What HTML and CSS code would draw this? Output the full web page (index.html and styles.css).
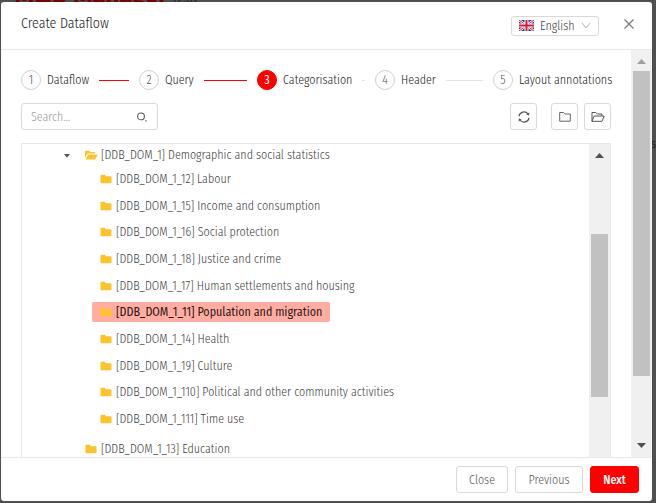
FILE: index.html
```
<!DOCTYPE html>
<html lang="en">
<head>
<meta charset="utf-8">
<title>Create Dataflow</title>
<link rel="stylesheet" href="styles.css">
</head>
<body>
<svg class="defs" aria-hidden="true">
  <symbol id="folder" viewBox="0 0 12 10"><path fill="#fac42a" d="M0.5 1.5Q.5 .8 1.3 .8H4.6L6.1 2.3H10.7Q11.5 2.3 11.5 3V8.5Q11.5 9.3 10.7 9.3H1.3Q.5 9.3 .5 8.5Z"/></symbol>
</svg>
<div class="behind" aria-hidden="true">M&amp;D Manager <small>(2.0)</small></div>
<div class="behind-cell" aria-hidden="true">s</div>
<main class="modal" role="dialog" aria-labelledby="title">
  <header class="head">
    <h1 id="title">Create Dataflow</h1>
    <div class="language">
      <svg width="15" height="11" viewBox="0 0 15 11"><path fill="#173b83" d="M0 0h15v11H0z"/><path stroke="#fff" stroke-width="2.4" d="m0 0 15 11M15 0 0 11"/><path stroke="#d8183b" d="m0 0 15 11M15 0 0 11"/><path stroke="#fff" stroke-width="4" d="M7.5 0v11M0 5.5h15"/><path stroke="#d8183b" stroke-width="2" d="M7.5 0v11M0 5.5h15"/></svg>
      <select aria-label="Language"><option>English</option></select>
      <svg width="10" height="8" viewBox="0 0 10 8"><path d="m1 1 4 5 4-5" fill="none" stroke="#b5b5b5"/></svg>
    </div>
    <button class="close" aria-label="Close dialog"><svg width="12" height="12" viewBox="0 0 12 12"><path d="m1.5 1.5 9 9m0-9-9 9" stroke="#777" stroke-width="1.2"/></svg></button>
  </header>
  <div class="body">
    <div class="content">
      <ol class="steps">
        <li class="done"><span class="num">1</span><span>Dataflow</span></li>
        <li class="done"><span class="num">2</span><span>Query</span></li>
        <li class="active"><span class="num">3</span><span>Categorisation</span></li>
        <li><span class="num">4</span><span>Header</span></li>
        <li><span class="num">5</span><span>Layout annotations</span></li>
      </ol>
      <div class="tools">
        <label class="search"><input type="text" placeholder="Search..." aria-label="Search">
          <svg width="12" height="12" viewBox="0 0 12 12"><circle cx="5" cy="5.4" r="3.4" fill="none" stroke="#555" stroke-width="1.1"/><path d="M9.5 9h1v1.4h-1z" fill="#555"/></svg></label>
        <button class="tool refresh" aria-label="Refresh"><svg width="14" height="14" viewBox="0 0 14 14" fill="none" stroke="#555" stroke-width="1.2"><path d="M2 6.2A5 5 0 0 1 11 4M12 7.8A5 5 0 0 1 3 10"/><path fill="#555" stroke="none" d="m12.4 2.4-.3 3.2L9.3 4.4zM1.6 11.6l.3-3.2 2.8 1.2z"/></svg></button>
        <button class="tool" aria-label="Collapse all"><svg width="12" height="12" viewBox="0 0 12 12" fill="none" stroke="#666"><path d="M.7 1.5H4.6L6.1 3H11.3V10.2H.7Z"/></svg></button>
        <button class="tool" aria-label="Expand all"><svg width="14" height="12" viewBox="0 0 14 12" fill="none" stroke="#555"><path d="M1 10.3V1.5H4.8L6.3 3H10.9V4.8M1 10.3 3.2 5H13.2L11 10.3Z"/></svg></button>
      </div>
      <div class="panel">
        <div class="tree">
          <div class="row parent"><svg class="caret" width="8" height="5" viewBox="0 0 8 5"><path fill="#555" d="M1 1h6L4 4.7z"/></svg><svg class="open" width="13" height="10" viewBox="0 0 13 10"><path fill="#fac42a" d="M0 8V1.5Q0 .8.8.8H4L5.5 2.1H9.5Q10.2 2.1 10.2 3V3.6H3.1Q2.5 3.6 2.2 4.1ZM.6 9.5 3 4.9Q3.2 4.5 3.7 4.5H12.2Q12.8 4.5 12.5 5.1L10.4 9Q10.1 9.5 9.6 9.5Z"/></svg><span>[DDB_DOM_1] Demographic and social statistics</span></div>
          <ul class="children">
            <li class="row"><svg width="12" height="10"><use href="#folder"/></svg><span>[DDB_DOM_1_12] Labour</span></li>
            <li class="row"><svg width="12" height="10"><use href="#folder"/></svg><span>[DDB_DOM_1_15] Income and consumption</span></li>
            <li class="row"><svg width="12" height="10"><use href="#folder"/></svg><span>[DDB_DOM_1_16] Social protection</span></li>
            <li class="row"><svg width="12" height="10"><use href="#folder"/></svg><span>[DDB_DOM_1_18] Justice and crime</span></li>
            <li class="row"><svg width="12" height="10"><use href="#folder"/></svg><span>[DDB_DOM_1_17] Human settlements and housing</span></li>
            <li class="row selected"><svg width="12" height="10"><use href="#folder"/></svg><span>[DDB_DOM_1_11] Population and migration</span></li>
            <li class="row"><svg width="12" height="10"><use href="#folder"/></svg><span>[DDB_DOM_1_14] Health</span></li>
            <li class="row"><svg width="12" height="10"><use href="#folder"/></svg><span>[DDB_DOM_1_19] Culture</span></li>
            <li class="row"><svg width="12" height="10"><use href="#folder"/></svg><span>[DDB_DOM_1_110] Political and other community activities</span></li>
            <li class="row"><svg width="12" height="10"><use href="#folder"/></svg><span>[DDB_DOM_1_111] Time use</span></li>
          </ul>
          <div class="row sibling"><svg width="12" height="10"><use href="#folder"/></svg><span>[DDB_DOM_1_13] Education</span></div>
        </div>
        <div class="bar inner"><svg width="9" height="5" viewBox="0 0 9 5"><path fill="#505050" d="M0 5 4.5 0 9 5z"/></svg><i></i></div>
      </div>
    </div>
    <div class="bar outer"><svg width="9" height="5" viewBox="0 0 9 5"><path fill="#a0a0a0" d="M0 5 4.5 0 9 5z"/></svg><i></i><svg class="down" width="9" height="5" viewBox="0 0 9 5"><path fill="#505050" d="M0 0 4.5 5 9 0z"/></svg></div>
  </div>
  <footer class="foot">
    <button class="btn">Close</button>
    <button class="btn wide">Previous</button>
    <button class="btn primary">Next</button>
  </footer>
</main>
</body>
</html>
```
FILE: styles.css
```
* { box-sizing: border-box; }
body {
  margin: 0;
  height: 100vh;
  padding: 2px 4px 2px 1px;
  overflow: hidden;
  background: #4f4f4f;
  color: #404040;
  font: 300 12px/20px "Fira Sans Condensed", "Liberation Sans Narrow", "Arial Narrow", Lato, sans-serif;
}
button, input, select { font: inherit; color: inherit; }
svg { display: block; flex: none; }
ol, ul, h1 { margin: 0; padding: 0; list-style: none; }
.defs { position: absolute; width: 0; height: 0; }
.behind {
  position: absolute;
  top: -14px;
  left: 15px;
  line-height: 18px;
  font-size: 24px;
  font-family: "Fira Sans", "Open Sans", sans-serif;
  font-weight: bold;
  color: #780000;
}
.behind small { font-size: 12px; font-weight: normal; color: #222; }
.behind-cell { position: absolute; right: 0; top: 134px; color: #111; }

.modal {
  position: relative;
  display: flex;
  flex-direction: column;
  height: 100%;
  overflow: hidden;
  border-radius: 3px;
  background: #fff;
}
.head {
  display: flex;
  align-items: center;
  flex: none;
  height: 48px;
  padding: 0 15px 4px 20px;
  border-bottom: 1px solid #e8e8e8;
}
.head h1 { flex: 1; font-size: 14px; font-weight: 300; color: #222; }
.language {
  display: flex;
  align-items: center;
  gap: 6px;
  height: 20px;
  margin: 4px 22px 0 0;
  padding: 0 7px;
  border: 1px solid #d9d9d9;
  border-radius: 3px;
}
.language select {
  appearance: none;
  width: 35px;
  height: 18px;
  padding: 0;
  border: 0;
  background: none;
  line-height: 18px;
}
.close { padding: 2px; border: 0; background: none; }

.body { display: flex; flex: 1; min-height: 0; overflow: hidden; }
.content {
  display: flex;
  flex-direction: column;
  flex: 1;
  min-width: 0;
  padding: 20px 20px 0;
}
.steps { display: grid; grid-template-columns: repeat(5, minmax(0, 1fr)); color: #222; }
.steps li { display: flex; align-items: center; gap: 6px; white-space: nowrap; }
.steps li:not(:last-child)::after {
  content: "";
  flex: 1;
  height: 1px;
  margin: 0 10px 0 4px;
  background: #e4e4e4;
}
.steps li.done::after { background: #f00; }
.num {
  flex: none;
  width: 20px;
  height: 20px;
  border: 1px solid #d0d0d0;
  border-radius: 50%;
  text-align: center;
  line-height: 18px;
  color: #555;
}
.steps .active .num { border-color: #f00; background: #f00; color: #fff; font-weight: 400; }

.tools { display: flex; gap: 6px; margin: 13px 0; }
.search {
  display: flex;
  align-items: center;
  width: 137px;
  height: 27px;
  margin-right: auto;
  padding: 0 9px;
  border: 1px solid #d9d9d9;
  border-radius: 3px;
}
.search input { flex: 1; min-width: 0; padding: 0; border: 0; outline: 0; }
.search input::placeholder { color: #999; }
.tool {
  display: grid;
  place-items: center;
  width: 27px;
  height: 27px;
  padding: 0;
  border: 1px solid #d9d9d9;
  border-radius: 3px;
  background: #fff;
}
.refresh { margin-right: 8px; }

.panel {
  display: flex;
  flex: 1;
  min-height: 0;
  border: 1px solid #e8e8e8;
  border-bottom: 0;
}
.tree { display: flex; flex-direction: column; flex: 1; min-width: 0; }
.row {
  display: flex;
  align-items: center;
  gap: 4px;
  width: max-content;
  height: 20px;
  padding: 0 8px;
  border-radius: 2px;
  white-space: nowrap;
}
.parent { padding-left: 41px; gap: 3px; margin-top: 1px; }
.caret { margin-right: 11px; }
.children {
  display: flex;
  flex-direction: column;
  justify-content: space-between;
  flex: 1;
  margin: 4px 0 10px;
  padding-left: 70px;
}
.selected { background: #ffada3; font-weight: 400; color: #2f1c1a; }
.sibling { margin: 0 0 -2px 55px; }

.bar { display: flex; flex-direction: column; align-items: center; flex: none; width: 21px; background: #f0f0f0; }
.bar i { width: 17px; background: #c1c1c1; }
.inner svg { margin-top: 9px; }
.inner i { height: 52%; margin-top: 76px; }
.outer svg { margin-top: 9px; }
.outer i { height: 75%; margin-top: 7px; }
.outer .down { margin: auto 0 9px; }

.foot {
  display: flex;
  justify-content: flex-end;
  align-items: center;
  gap: 7px;
  flex: none;
  height: 44px;
  padding: 0 13px;
  border-top: 1px solid #e8e8e8;
}
.btn {
  width: 52px;
  height: 27px;
  padding: 0;
  border: 1px solid #d9d9d9;
  border-radius: 3px;
  background: #fff;
  color: #555;
}
.wide { width: 68px; }
.primary { width: 49px; border-color: #f00; background: #f00; color: #fff; font-weight: 500; }
```
